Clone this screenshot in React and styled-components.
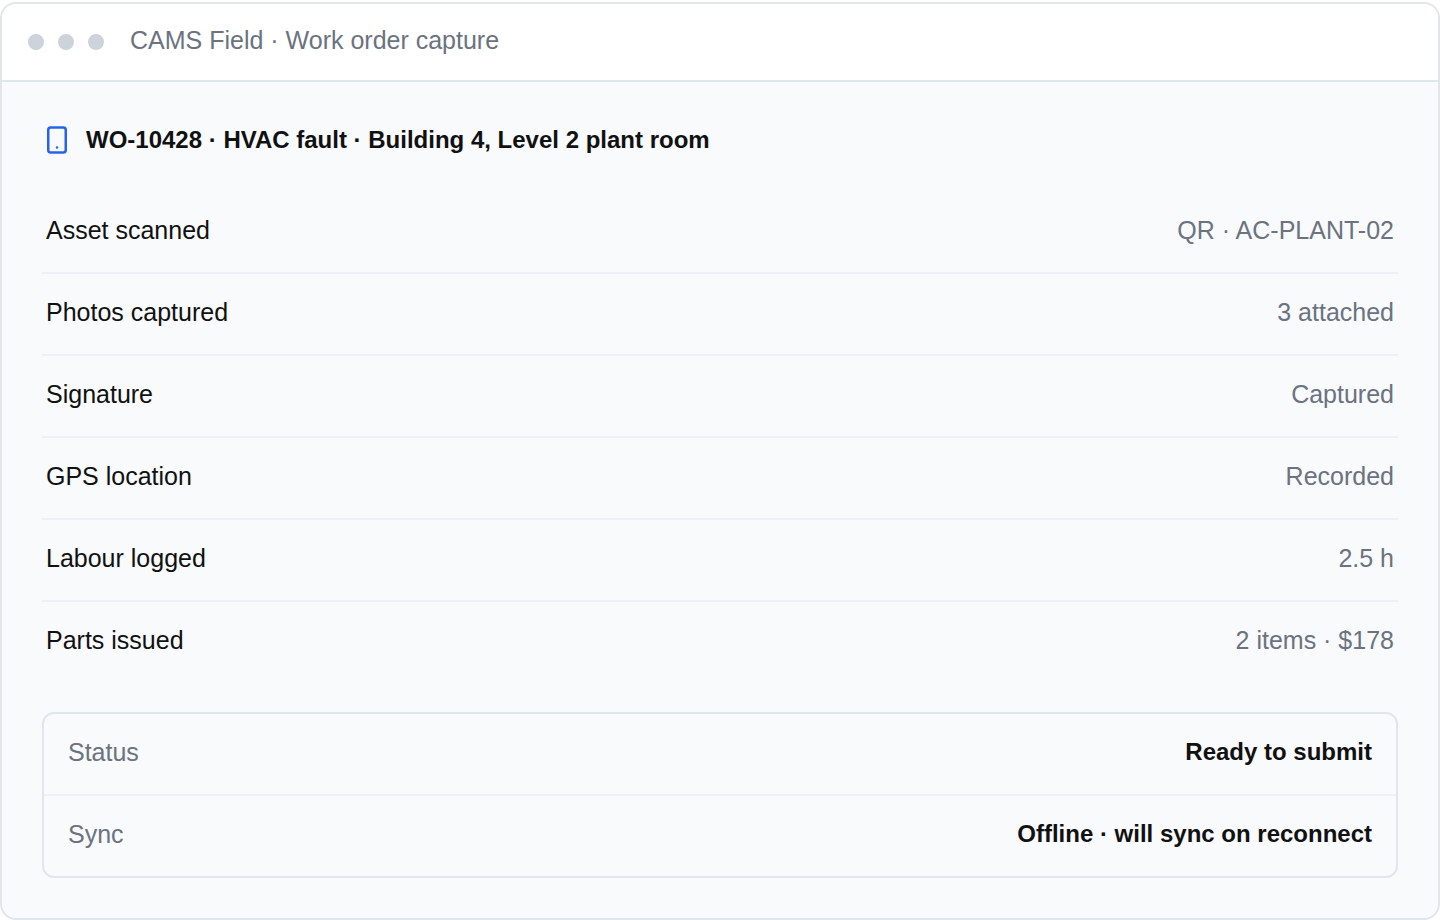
import React from 'react'
import styled, { createGlobalStyle } from 'styled-components'
import { Smartphone } from 'lucide-react'

const DETAILS = [
    { label: 'Asset scanned', value: 'QR · AC-PLANT-02' },
    { label: 'Photos captured', value: '3 attached' },
    { label: 'Signature', value: 'Captured' },
    { label: 'GPS location', value: 'Recorded' },
    { label: 'Labour logged', value: '2.5 h' },
    { label: 'Parts issued', value: '2 items · $178' },
]

const SUMMARY = [
    { label: 'Status', value: 'Ready to submit' },
    { label: 'Sync', value: 'Offline · will sync on reconnect' },
]

function App() {
    return (
        <>
            <GlobalStyle />
            <Window>
                <TitleBar>
                    <Dots aria-hidden="true">
                        <Dot />
                        <Dot />
                        <Dot />
                    </Dots>
                    <Title>CAMS Field · Work order capture</Title>
                </TitleBar>

                <Body>
                    <Heading>
                        <PhoneIcon size={30} aria-hidden="true" />
                        <h2>WO-10428 · HVAC fault · Building 4, Level 2 plant room</h2>
                    </Heading>

                    <DetailList>
                        {DETAILS.map((item) => (
                            <DetailRow key={item.label}>
                                <dt>{item.label}</dt>
                                <dd>{item.value}</dd>
                            </DetailRow>
                        ))}
                    </DetailList>

                    <SummaryCard>
                        {SUMMARY.map((item) => (
                            <SummaryRow key={item.label}>
                                <dt>{item.label}</dt>
                                <dd>{item.value}</dd>
                            </SummaryRow>
                        ))}
                    </SummaryCard>
                </Body>
            </Window>
        </>
    )
}

export default App

const GlobalStyle = createGlobalStyle`
    * {
        box-sizing: border-box;
    }
    body {
        margin: 0;
        background: #ffffff;
        color: #111111;
        font-family: "Liberation Sans", Arial, sans-serif;
        font-size: 25px;
        line-height: 36px;
    }
    h1, h2, dl, dt, dd {
        margin: 0;
    }
`
const Window = styled.main`
    display: flex;
    flex-direction: column;
    min-height: calc(100vh - 2px);
    margin-top: 2px;
    border: 2px solid #e2e5ec;
    border-radius: 16px;
    background: #f8fafc;
    overflow: hidden;
`
const TitleBar = styled.header`
    display: flex;
    align-items: center;
    gap: 26px;
    padding: 18px 26px 22px;
    background: #ffffff;
    border-bottom: 2px solid #e2e5ec;
`
const Dots = styled.div`
    display: flex;
    gap: 14px;
    padding-top: 4px;
`
const Dot = styled.span`
    width: 16px;
    height: 16px;
    border-radius: 50%;
    background: #ced2db;
`
const Title = styled.h1`
    font-size: 25px;
    font-weight: 400;
    color: #6b7280;
`
const Body = styled.section`
    flex: 1;
    padding: 40px;
`
const Heading = styled.div`
    display: flex;
    align-items: center;
    gap: 14px;

    h2 {
        font-size: 24px;
        font-weight: 700;
    }
`
const PhoneIcon = styled(Smartphone)`
    flex: none;
    color: #2563eb;
`
const DetailList = styled.dl`
    margin-top: 34px;
`
const Row = styled.div`
    display: flex;
    justify-content: space-between;
    gap: 24px;
`
const DetailRow = styled(Row)`
    padding: 20px 4px 24px;
    border-bottom: 2px solid #eef0f3;

    &:last-child {
        border-bottom: none;
    }
    dd {
        color: #6b7280;
    }
`
const SummaryCard = styled.dl`
    margin-top: 30px;
    border: 2px solid #e2e5ec;
    border-radius: 12px;
`
const SummaryRow = styled(Row)`
    padding: 20px 24px 24px;

    & + & {
        border-top: 2px solid #eef0f3;
    }
    dt {
        color: #6b7280;
    }
    dd {
        font-size: 24px;
        font-weight: 700;
    }
`
